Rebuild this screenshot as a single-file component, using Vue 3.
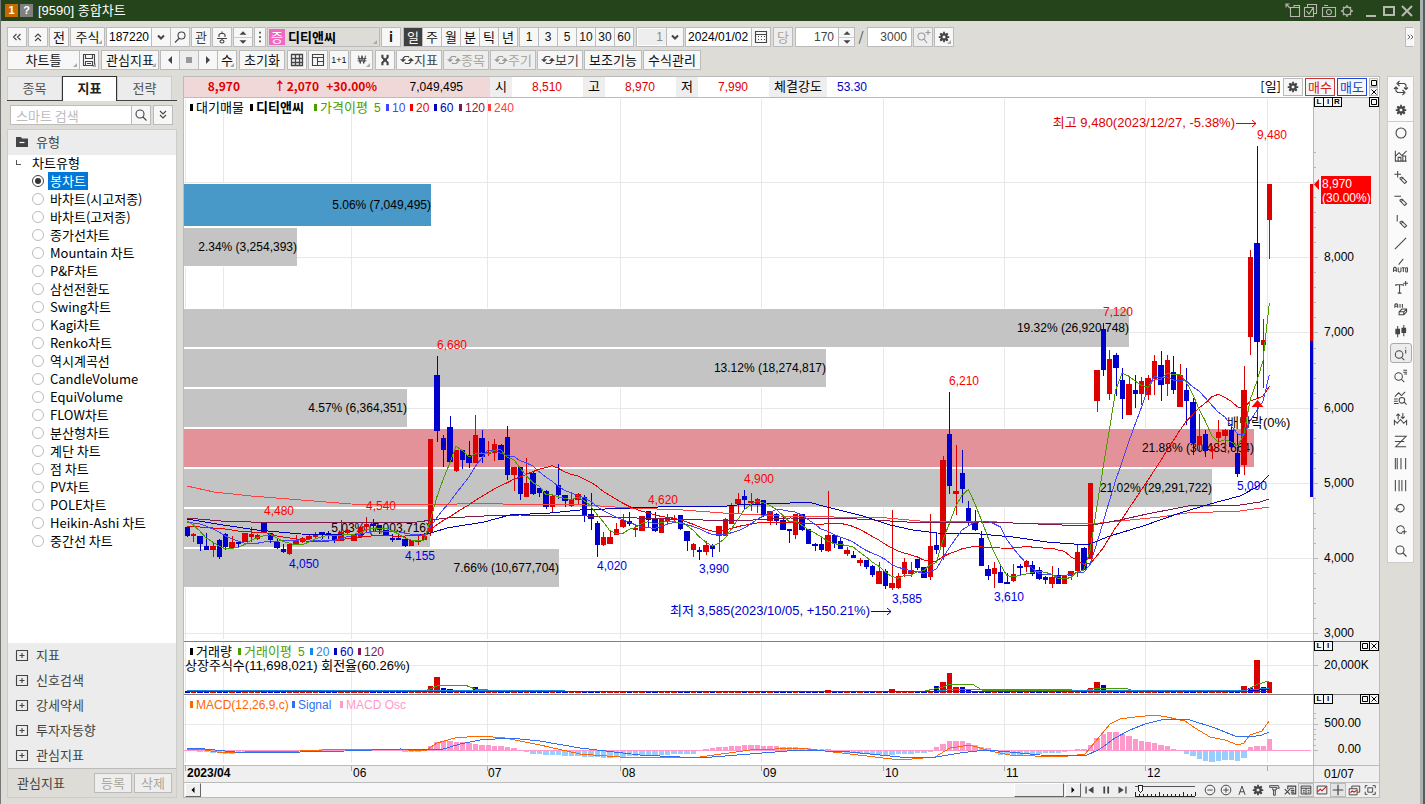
<script setup>
import { ref, computed, h, onMounted, onBeforeUnmount } from 'vue'

/* ---------- icons: s = stroked, f = filled, r = red stroke, x = white stroke, on a 16px grid ---------- */
const gearF = 'M7 2h2v2h1l1.5-1 1.5 1.5-1 1.5v1h2v2h-2v1l1 1.5-1.5 1.5-1.5-1h-1v2h-2v-2h-1l-1.5 1-1.5-1.5 1-1.5v-1h-2v-2h2v-1l-1-1.5 1.5-1.5 1.5 1h1zM6.5 6.5v3h3v-3z'
const icons = {
  left2: { s: 'M7.5 5l-3 3 3 3M11.5 5l-3 3 3 3' },
  up2: { s: 'M5 8l3-3 3 3M5 12l3-3 3 3' },
  down2: { s: 'M5 4l3 3 3-3M5 8l3 3 3-3' },
  right2: { s: 'M5 5l3 3-3 3M9 5l3 3-3 3' },
  chev: { s: 'M5 6.5l3 3 3-3', w: 2 },
  find: { s: 'M9.5 3a3.5 3.5 0 1 1 0 7a3.5 3.5 0 1 1 0-7zM7 9.5L3 13.5' },
  findR: { s: 'M7 3a4 4 0 1 1 0 8a4 4 0 1 1 0-8zM10 10l3.5 3.5' },
  findPlus: { s: 'M6.5 4a3.5 3.5 0 1 1 0 7a3.5 3.5 0 1 1 0-7zM9 10l3 4M13 1v5M10.5 3.5h5' },
  findI: { s: 'M6.5 5a4 4 0 1 1 0 8a4 4 0 1 1 0-8zM9 12l3 3M13.5 4v4M13.5 1.5v1' },
  findList: { s: 'M6 5a4 4 0 1 1 0 8a4 4 0 1 1 0-8zM9 12l3 3M11 2.5h4M11 4.5h4M12 6.5h3' },
  speaker: { s: 'M8 2.5v2M5 8V5.5l1.5-1h3l1.5 1V8M3 9.5h10M8 10v1M6 12.5a2 1.5 0 1 0 4 0a2 1.5 0 1 0-4 0' },
  dots: { f: 'M7 2h2v2H7zM7 7h2v2H7zM7 12h2v2H7z' },
  cal: { s: 'M2.5 2.5h11v11h-11zM2.5 5.5h11', f: 'M5 7h1v1H5zM8 7h1v1H8zM11 7h1v1h-1zM5 10h1v1H5zM8 10h1v1H8zM11 10h1v1h-1z' },
  gear: { f: gearF },
  gearO: { s: 'M8 4a4 4 0 1 1 0 8a4 4 0 1 1 0-8zM8 2v2M8 12v2M2 8h2M12 8h2M4 4l1 1M12 4l-1 1M4 12l1-1M12 12l-1-1', w: 1.4 },
  save: { s: 'M2.5 2.5h11v11h-11zM4.5 2.5v4h7v-4M4.5 13.5v-4h7v4M6 11.5h4' },
  prev: { f: 'M10 4v8L6 8z' },
  next: { f: 'M6 4v8l4-4z' },
  stop: { f: 'M5 5h6v6H5z' },
  table: { s: 'M2.5 2.5h11v11h-11zM2.5 6.5h11M2.5 10.5h11M6.5 2.5v11M10.5 2.5v11', w: 1.3 },
  panes: { s: 'M2.5 2.5h11v11h-11zM2.5 5.5h11M7.5 5.5v8M7.5 9.5h6' },
  won: { s: 'M4 3l2 9 2-9 2 9 2-9M3 6.5h10M3 9h10' },
  tool: { s: 'M5 2v3l2 2v2l-2 2v3M11 2v3l-2 2v2l2 2v3', w: 2.4 },
  swap: { s: 'M3.500 8V6l2-2h4l1 1M12.500 8v2l-2 2h-4l-1-1', f: 'M0 7h7l-3.500 3.500zM9 9h7l-3.500-3.500z', w: 1.4 },
  spinU: { f: 'M8 6l4 4H4z' },
  spinD: { f: 'M8 10l4-4H4z' },
  folder: { f: 'M2 3h5l1 1.5h6V13H2z', x: 'M5.5 8.5h5' },
  plus: { s: 'M2.5 3.5h5M2.5 3.5v10h11v-10h-6M8 6v5M5.5 8.5h5' },
  pop: { s: 'M5.5 4.5v9h9v-9zM9 4.5v-2h5.5v2M1 1l4 4M1 4.5V1h3.5' },
  stack: { s: 'M4.5 4.5v-3h9v9h-3M1.5 4.5h9v9h-9zM3.5 8l2.5 3 4-6' },
  cam: { s: 'M1.5 4.5h13v9h-13zM3 2.5h4M8 6.5a2.5 2.5 0 1 1 0 5a2.5 2.5 0 1 1 0-5z' },
  min: { s: 'M3 13h10', w: 2 },
  max: { s: 'M3 4h10v8H3z', w: 2 },
  close: { s: 'M3 3l10 10M13 3L3 13', w: 2 },
  loop: { s: 'M5 3.5h6.5l1.5 1.5v4M11 12.5H4.5L3 11V7M6.500 1L4 3.5 6.500 6M1 9l2-2 2 2M9.500 10l2.500 2.500-2.500 2.500M11 7.500l2 2 2-2' },
  circle: { s: 'M8 3a5 5 0 1 1 0 10a5 5 0 1 1 0-10z' },
  chartb: { s: 'M2.5 3v11h12M2.5 9l4-4 3 3 5-5M5.5 14v-4h3v4M10.5 14V8.5h3V14' },
  crossPen: { s: 'M5 1v7M1.5 4.5h7M7.5 8.5l2-1 5 5-2 2-5-5zM9 10l2-2' },
  linePen: { s: 'M1.5 4.5h7M7.5 8.5l2-1 5 5-2 2-5-5zM9 10l2-2' },
  vertPen: { s: 'M4.5 1v7M7.5 8.5l2-1 5 5-2 2-5-5zM9 10l2-2' },
  diag: { s: 'M2 14L14 2' },
  auto: { s: 'M6 7l5-6M.5 15v-4l1-1h1l1 1v4M.5 13h3M5.5 10v4l1 1h1l1-1v-4M9.5 10.5h3M11 10.5V15M13.5 11v3l.5 1h1l.5-1v-3l-.5-.5h-1z' },
  text: { s: 'M3 6.5V5h8v1.5M7 5v9M5 14h4M13.5 1v5M11 3.5h5' },
  erase: { s: 'M2 6V3l1-1h1l1 1v3M2 4.5h3M7.5 2v4M10 2v4M6.5 10.5l3-3h5v3l-3 3h-5zM6.5 10.5h5v3M11.5 10.5l3-3' },
  candles: { s: 'M5 2v12M11.5 1v12', f: 'M2.5 5h5v6h-5zM9 4h5v5.5H9z' },
  chartFind: { s: 'M2 7l4-4 3 3 4-4M1 9.5h4M1 12h4M1 14.5h5M9.5 8a3 3 0 1 1 0 6a3 3 0 1 1 0-6zM12 13l2.5 2.5' },
  wave: { s: 'M1.5 14V9l3 3 3.5-4 3.5 4 3-3v5M5.5 8V2M3.5 4l2-2 2 2M10.5 1v6M8.5 5l2 2 2-2' },
  zed: { s: 'M2 2.5h12L3 13.5h11M2 8h10' },
  bars1: { s: 'M2.5 2v12M4.5 2v12M8.5 2v12M13.5 2v12' },
  bars2: { s: 'M2.5 2v12M6.5 2v12M9.5 2v12M13.5 2v12' },
  undo: { s: 'M5 11.5a4 4 0 1 0-1-4M1.5 9.5h5M4 7v5' },
  redo: { s: 'M10 11.5a4 4 0 1 1 2-4M9.5 10.5h5M12 8v5' },
  first: { s: 'M3.5 4v8', f: 'M12 4v8L6 8z', w: 1.5 },
  pause: { s: 'M6 4v8M10.5 4v8', w: 2 },
  last: { s: 'M12.5 4v8', f: 'M4 4v8l6-4z', w: 1.5 },
  zoomOut: { s: 'M8 2.5a5.5 5.5 0 1 1 0 11a5.5 5.5 0 1 1 0-11zM5 8h6' },
  zoomIn: { s: 'M8 2.5a5.5 5.5 0 1 1 0 11a5.5 5.5 0 1 1 0-11zM5 8h6M8 5v6' },
  letterA: { s: 'M4.5 13.5l3.5-10 3.5 10M5.500 10h5' },
  hammer: { s: 'M3 5V3h10l1 3h-3V5H3zM6.5 6v2h4V6M7.5 8v6h2V8' },
  listX: { s: 'M5.5 7V3.5h9v9h-5M7.5 6h5M9 8.5h4M9 10.5h4M2 7l6 6M8 7l-6 6', w: 1.3 },
  grid2: { s: 'M2.5 3.5h11v9h-11zM2.5 6h11M8 6v7M4.5 8.5h2M4.5 10.5h2M10 8.5h2M10 10.5h2' },
  chartR: { s: 'M2.5 3.5h11v9h-11z', r: 'M3 10l3-3 2 2 5-5' },
  cross: { s: 'M8 2v12M2 8h12', w: 1.4 },
  winR: { s: 'M5.5 6V3.5h9v7H12M2.5 6.5h9v7h-9z', r: 'M4 11l2-2 2 1.5 3-2' },
  full: { s: 'M2.5 6V3H5M11 3h3v3M14 10v3h-3M5 13H2.5v-3M5.5 5.5h5.5v5H5.5z' },
  boxT: { s: 'M3 3h10v10H3z', w: 2 },
}
const Ic = (p) => {
  const i = icons[p.n]
  const k = []
  if (i.f) k.push(h('path', { d: i.f, fill: 'currentColor', 'fill-rule': 'evenodd' }))
  if (i.s) k.push(h('path', { d: i.s, fill: 'none', stroke: 'currentColor', 'stroke-width': i.w || 1.1 }))
  if (i.r) k.push(h('path', { d: i.r, fill: 'none', stroke: '#c00000', 'stroke-width': 1.2 }))
  if (i.x) k.push(h('path', { d: i.x, fill: 'none', stroke: '#fff', 'stroke-width': 1.2 }))
  return h('svg', { width: p.z || 16, height: p.z || 16, viewBox: '0 0 16 16', 'aria-hidden': 'true' }, k)
}
Ic.props = ['n', 'z']

/* ---------- static lists ---------- */
const periods = ['일', '주', '월', '분', '틱', '년']
const minutes = [1, 3, 5, 10, 30, 60]
const types = ['봉차트', '바차트(시고저종)', '바차트(고저종)', '종가선차트', 'Mountain 차트', 'P&F차트', '삼선전환도', 'Swing차트', 'Kagi차트', 'Renko차트', '역시계곡선', 'CandleVolume', 'EquiVolume', 'FLOW차트', '분산형차트', '계단 차트', '점 차트', 'PV차트', 'POLE차트', 'Heikin-Ashi 차트', '중간선 차트']
const chartType = ref('봉차트')
const folders = ['지표', '신호검색', '강세약세', '투자자동향', '관심지표']
const tools = ['circle', 'chartb', 'crossPen', 'linePen', 'vertPen', 'diag', 'auto', 'text', 'erase', 'candles', 'findI', 'findList', 'chartFind', 'wave', 'zed', 'bars1', 'bars2', 'undo', 'redo', 'findR']
const foot = ['zoomOut', 'zoomIn', 'letterA', 'gear', 'hammer', 'listX', 'grid2', 'chartR', 'cross', 'winR', 'full']

/* ---------- responsive horizontal scale ---------- */
const plot = ref(null)
const w = ref(1129)
let ro
onMounted(() => {
  const m = () => { w.value = Math.round(plot.value.getBoundingClientRect().width) || 1129 }
  m()
  ro = new ResizeObserver(m)
  ro.observe(plot.value)
})
onBeforeUnmount(() => ro && ro.disconnect())
const X = (v) => 184 + ((v - 184) * w.value) / 1129

/* ---------- candles: [rising, bodyTop, bodyBottom, high, low] ---------- */
const C = [
  [0,527,536,527,537],[1,534,536,533,542],[0,536,544,536,551],[0,546,550,533,550],[1,546,550,543,557],[0,540,557,539,559],[0,534,547,533,550],[1,542,548,536,548],[0,542,544,542,548],[1,533,542,533,542],
  [1,534,537,527,542],[1,535,539,534,540],[0,523,532,523,532],[0,533,540,533,543],[0,542,548,538,549],[0,549,552,544,553],[1,544,554,544,555],[1,541,544,535,544],[1,538,542,537,543],[1,536,539,535,540],
  [1,535,537,532,539],[0,532,534,532,539],[0,533,534,531,539],[0,535,541,535,543],[1,532,541,520,541],[1,530,533,529,535],[1,535,541,535,541],[1,527,537,526,537],[1,524,527,517,533],[0,524,526,519,532],
  [0,525,530,525,534],[0,530,535,530,535],[0,538,539,534,542],[0,538,540,535,540],[0,539,546,537,547],[1,540,546,540,546],[1,540,542,535,545],[1,536,540,536,540],[1,439,532,439,536],[0,375,431,356,442],
  [0,438,450,435,467],[0,427,462,416,463],[1,450,471,450,472],[0,450,460,450,469],[0,455,463,441,468],[1,435,463,415,463],[0,438,457,430,463],[1,452,454,441,456],[1,444,453,439,461],[0,445,460,444,460],
  [0,437,475,426,480],[1,467,475,467,491],[0,467,494,467,500],[1,483,497,458,497],[0,473,494,472,495],[0,488,493,488,497],[0,491,507,490,509],[1,496,507,494,513],[0,485,495,464,499],[0,495,501,495,507],
  [1,499,506,494,507],[1,494,500,493,504],[0,497,515,495,522],[0,514,519,493,530],[0,523,545,521,557],[1,537,545,532,546],[1,537,544,531,544],[1,529,535,523,535],[1,520,527,514,528],[0,521,524,512,526],
  [1,528,529,524,537],[1,516,531,516,531],[0,511,520,511,528],[0,518,531,512,532],[1,519,533,519,533],[1,519,522,514,524],[1,518,519,515,522],[0,515,529,515,530],[0,531,541,531,551],[1,544,550,543,557],
  [0,550,552,547,560],[1,545,552,541,555],[0,545,549,544,557],[1,526,536,526,552],[1,519,536,518,536],[1,505,524,503,524],[1,499,504,493,513],[0,496,500,490,509],[1,501,503,493,511],[1,499,504,498,513],
  [0,500,515,500,517],[1,511,521,511,525],[0,514,521,513,525],[0,520,530,517,530],[0,529,531,529,543],[1,514,535,514,539],[0,514,530,514,531],[0,529,544,529,544],[0,544,546,543,551],[0,544,550,537,552],
  [1,535,551,491,552],[0,535,543,535,548],[0,541,549,538,549],[1,550,554,547,556],[0,555,558,551,558],[1,560,563,558,566],[0,560,567,560,569],[0,566,575,565,577],[1,571,584,562,584],[0,571,586,569,589],
  [1,583,588,510,590],[1,576,588,573,589],[1,562,574,558,577],[1,570,574,562,577],[0,559,568,559,570],[0,567,578,567,578],[1,546,577,514,580],[0,545,550,533,554],[1,460,547,456,560],[0,434,486,392,494],
  [1,491,494,445,515],[0,473,489,450,503],[0,508,521,501,526],[0,523,530,510,531],[0,538,566,531,566],[0,569,576,565,580],[1,568,574,562,588],[0,572,583,564,583],[0,582,584,573,584],[1,574,581,564,582],
  [0,566,568,564,576],[1,561,567,560,572],[0,565,574,561,576],[0,570,579,567,580],[0,577,580,576,584],[1,577,584,566,588],[0,575,584,568,584],[1,575,584,575,584],[1,571,576,571,580],[1,552,571,545,577],
  [0,548,570,547,570],[1,483,559,483,559],[1,370,401,370,412],[0,329,370,323,376],[1,359,394,350,400],[0,355,368,353,396],[0,380,399,368,419],[1,384,415,377,415],[0,390,394,375,408],[1,381,394,377,405],
  [1,378,395,375,400],[1,361,379,355,395],[0,365,385,351,401],[1,360,384,355,396],[0,372,390,356,394],[1,375,407,364,407],[0,390,401,368,425],[0,402,443,398,455],[1,436,445,414,451],[0,434,451,430,457],
  [1,449,450,446,459],[1,432,438,420,447],[1,430,436,429,453],[0,430,447,424,451],[0,453,474,434,477],[1,390,465,366,475],[1,257,337,250,355],[0,243,342,146,398],[1,340,345,319,388],[1,184,220,184,259],
]
const step = 6.405
const slot = (i) => {
  const left = Math.round(X(184.6 + i * step))
  return { x: left, bw: Math.max(2, Math.round(X(184.6 + (i + 1) * step)) - left - 1) }
}
const candles = computed(() => C.map((c, i) => ({
  ...slot(i), wx: Math.round(X(187 + i * step)), col: c[0] ? '#dd0000' : '#0000cc', t: c[1], bh: Math.max(2, c[2] - c[1]), hi: c[3], lo: c[4],
})))
const close = C.map((c) => (c[0] ? c[1] : c[2]))
const poly = (pts) => pts.map((p) => `${X(p[0]).toFixed(1)},${p[1].toFixed(1)}`).join(' ')
const ma = (n, head) => {
  const out = head.map((y, i) => [187 + i * step, y])
  for (let i = head.length; i < close.length; i++) {
    let s = 0
    for (let k = 0; k < n; k++) s += i - k < 0 ? head[0] : close[i - k]
    out.push([187 + i * step, s / n])
  }
  return out
}
const lines = [
  { c: '#ff4040', p: [[187,486],[214,492],[251,496],[301,500],[351,504],[431,505],[484,503],[503,504],[570,504],[630,508],[683,510],[723,513],[780,516],[887,518],[920,521],[980,521],[1013,523],[1090,524],[1120,521],[1160,517],[1187,513],[1240,511],[1269,507]] },
  { c: '#801850', p: [[187,518],[221,521],[251,522],[417,522],[447,518],[484,516],[520,515],[587,516],[637,518],[703,520],[753,520],[790,518],[857,519],[890,521],[923,523],[980,522],[1013,523],[1087,526],[1120,520],[1147,514],[1173,509],[1193,505],[1240,505],[1260,502],[1269,499]] },
  { c: '#0000c0', p: [[187,519],[223,525],[257,530],[301,534],[364,535],[417,535],[431,533],[447,528],[484,522],[510,515],[550,513],[580,510],[630,508],[687,506],[717,507],[737,505],[790,503],[808,502],[827,507],[863,516],[890,525],[913,530],[937,533],[980,534],[1013,537],[1047,542],[1087,545],[1110,536],[1143,526],[1180,513],[1210,504],[1240,496],[1257,487],[1269,475]] },
  { c: '#ee0000', p: ma(20, [526,526,527,527,528,528,529,530,531,531,532,532,532,534,536,537,538,539,540]) },
  { c: '#4444ff', p: ma(10, [522,523,524,526,529,532,536,539,541]) },
  { c: '#4c9c00', p: ma(5, [521,525,531,538]) },
]
const gridX = [185, 223, 351, 487, 620, 761, 883, 1004, 1145, 1267]
const gridY = [182, 257, 332, 408, 483, 558, 633]
const profile = [
  { y: 184, h: 42, x: 431, c: '#4898c8', t: '5.06% (7,049,495)' },
  { y: 228, h: 38, x: 297, c: '#c4c4c4', t: '2.34% (3,254,393)' },
  { y: 309, h: 38, x: 1129, c: '#c4c4c4', t: '19.32% (26,920,748)' },
  { y: 349, h: 38, x: 826, c: '#c4c4c4', t: '13.12% (18,274,817)' },
  { y: 389, h: 38, x: 407, c: '#c4c4c4', t: '4.57% (6,364,351)' },
  { y: 429, h: 38, x: 1254, c: '#e4929a', t: '21.88% (30,483,664)' },
  { y: 469, h: 38, x: 1212, c: '#c4c4c4', t: '21.02% (29,291,722)' },
  { y: 509, h: 38, x: 430, c: '#c4c4c4', t: '5.03% (7,003,716)' },
  { y: 549, h: 38, x: 559, c: '#c4c4c4', t: '7.66% (10,677,704)' },
]
const R = '#ff0000', B = '#0000e6'
const notes = [
  [437,349,'6,680',R],[264,515,'4,480',R],[366,510,'4,540',R],[289,568,'4,050',B],[405,560,'4,155',B],[648,504,'4,620',R],[744,483,'4,900',R],[597,570,'4,020',B],[699,573,'3,990',B],[949,385,'6,210',R],[892,603,'3,585',B],[994,601,'3,610',B],[1103,316,'7,120',R],[1237,490,'5,090',B],[1257,139,'9,480',R],
]
const legend = [
  [190,'대기매물','#000'],[250,'디티앤씨','#000','bold'],[314,'가격이평','#4c9c00'],[386,'10','#4444ff'],[410,'20','#ee0000'],[434,'60','#0000c0'],[459,'120','#801850'],[488,'240','#ff4040'],
]
const volLegend = [[190,'거래량','#000'],[238,'거래이평','#4c9c00'],[310,'20','#1888e0'],[334,'60','#0000c0'],[358,'120','#801850']]
const macdLegend = [[190,'MACD(12,26,9,c)','#ff6600'],[292,'Signal','#3070f0'],[340,'MACD Osc','#ff99cc']]

const tops = { 37:690,38:686,39:677,40:688,41:689,45:687,46:690,100:690,110:689,117:686,118:682,119:673,120:687,121:687,122:690,139:690,141:688,142:682,143:685,144:690,145:690,146:690,147:690,165:686,166:688,167:660,168:687,169:682 }
const flip = { 39: 1, 45: 0, 119: 1, 166: 0, 167: 1, 168: 0 }
const vols = computed(() => C.map((c, i) => {
  const t = tops[i] || 691
  return { ...slot(i), t, hh: 693 - t, col: (i in flip ? flip[i] : c[0]) ? '#dd0000' : '#0000cc' }
}))
const volLines = [
  { c: '#4c9c00', p: [[187,691],[425,691],[437,686],[465,685],[475,689],[500,691],[925,691],[943,687],[951,684],[972,684],[982,690],[1087,690],[1100,688],[1124,688],[1135,691],[1245,691],[1258,684],[1269,681]] },
  { c: '#1888e0', p: [[187,691],[431,690],[550,690],[565,691],[937,691],[955,689],[1068,689],[1075,691],[1250,690],[1269,688]] },
  { c: '#0000c0', p: [[187,692],[800,691],[1250,691],[1269,689]] },
  { c: '#801850', p: [[187,691],[1269,691]] },
]
const hist = [[0,0],[3,-1],[6,-3],[9,-2],[12,0],[20,0],[22,1],[30,1],[33,0],[34,-1],[36,-1],[37,1],[38,4],[39,8],[41,9],[45,6],[50,3],[52,0],[54,-3],[60,-5],[66,-7],[72,-4],[79,-3],[80,0],[82,2],[88,5],[94,3],[99,1],[101,0],[103,-2],[108,-4],[113,-3],[116,-1],[117,3],[119,9],[121,9],[124,3],[126,0],[127,-4],[129,-5],[131,-3],[136,-2],[138,0],[139,1],[140,1],[141,5],[142,12],[143,16],[144,18],[145,18],[146,16],[147,14],[148,11],[149,9],[150,8],[151,7],[152,5],[153,4],[154,1],[155,0],[156,-3],[157,-5],[158,-8],[159,-10],[160,-11],[161,-10],[162,-9],[163,-9],[164,-10],[165,-7],[166,3],[167,4],[168,4],[169,11]]
const osc = computed(() => C.map((c, i) => {
  const k = Math.max(1, hist.findIndex((p) => p[0] >= i))
  const [a, b] = [hist[k - 1], hist[k]]
  const v = Math.round(a[1] + ((b[1] - a[1]) * (i - a[0])) / (b[0] - a[0]))
  return { ...slot(i), t: v > 0 ? 750 - v : 751, hh: Math.abs(v), col: v > 0 ? '#ff99cc' : '#99ccff' }
}))
const macdLines = [
  { c: '#ff6600', p: [[187,749],[205,750],[223,753],[245,752],[300,751],[345,749],[390,749],[425,751],[437,743],[455,738],[480,736],[505,738],[540,745],[580,754],[620,757],[700,757],[750,750],[800,748],[850,754],[900,760],[935,757],[950,748],[970,745],[990,751],[1010,755],[1060,757],[1085,754],[1100,736],[1110,724],[1120,719],[1135,717],[1155,715],[1167,717],[1185,721],[1195,728],[1210,737],[1225,740],[1238,745],[1244,743],[1250,735],[1262,731],[1269,721]] },
  { c: '#3070f0', p: [[187,748],[205,749],[235,752],[300,752],[345,751],[400,749],[440,750],[460,744],[480,740],[510,738],[540,741],[580,748],[640,755],[700,758],[750,754],[800,750],[850,752],[900,757],[930,758],[960,753],[985,750],[1010,752],[1040,755],[1085,756],[1100,749],[1115,738],[1130,730],[1145,724],[1165,719],[1190,720],[1215,728],[1235,736],[1250,737],[1262,735],[1269,732]] },
]
const priceTicks = Array.from({ length: 33 }, (_, i) => Math.round(152 + i * 15.04))
const months = [[353,'06'],[488,'07'],[622,'08'],[763,'09'],[885,'10'],[1006,'11'],[1147,'12']]
</script>

<template>
  <div class="win">
    <header class="title">
      <span class="tag one">1</span><span class="tag q">?</span>
      <h1>[9590] 종합차트</h1>
      <div class="caps">
        <button aria-label="분리"><Ic n="pop" /></button>
        <button aria-label="화면목록"><Ic n="stack" /></button>
        <button aria-label="캡처"><Ic n="cam" /></button>
        <button aria-label="환경설정"><Ic n="gearO" /></button>
        <button aria-label="최소화" class="wide"><Ic n="min" /></button>
        <button aria-label="최대화"><Ic n="max" /></button>
        <button aria-label="닫기"><Ic n="close" /></button>
      </div>
    </header>

    <div class="bars">
      <div class="row">
        <button class="b" aria-label="이전"><Ic n="left2" /></button>
        <button class="b" aria-label="접기"><Ic n="up2" /></button>
        <button class="b">전</button>
        <button class="b w35 fold">주식</button>
        <div class="g">
          <input class="code" aria-label="종목코드" value="187220" />
          <button class="b" aria-label="종목 목록"><Ic n="chev" /></button>
          <button class="b" aria-label="종목 검색"><Ic n="find" /></button>
        </div>
        <button class="b dim">관</button>
        <button class="b dim" aria-label="음성"><Ic n="speaker" /></button>
        <div class="spin w20"><button aria-label="위"><Ic n="spinU" :z="14" /></button><button aria-label="아래"><Ic n="spinD" :z="14" /></button></div>
        <button class="b w12" aria-label="더보기"><Ic n="dots" :z="14" /></button>
        <div class="stock fold"><span class="mk">증</span><b>디티앤씨</b></div>
        <button class="b bold">i</button>
        <div class="g sp">
          <button v-for="(p, i) in periods" :key="p" class="b" :class="{ on: i === 0 }">{{ p }}</button>
        </div>
        <div class="g">
          <button v-for="m in minutes" :key="m" class="b num">{{ m }}</button>
        </div>
        <div class="sel sp">
          <select aria-label="주기" disabled><option>1</option></select>
          <span class="arrow"><Ic n="chev" /></span>
        </div>
        <div class="g">
          <input class="date" aria-label="기준일" value="2024/01/02" />
          <button class="b" aria-label="달력"><Ic n="cal" /></button>
        </div>
        <button class="b off sp">당</button>
        <div class="g sp">
          <input class="cnt" aria-label="봉 개수" value="170" />
          <div class="spin w16"><button aria-label="늘리기"><Ic n="spinU" :z="14" /></button><button aria-label="줄이기"><Ic n="spinD" :z="14" /></button></div>
        </div>
        <span class="slash">/</span>
        <input class="total" aria-label="전체 개수" value="3000" />
        <button class="b off" aria-label="추가 조회"><Ic n="findPlus" /></button>
        <button class="b fold" aria-label="설정"><Ic n="gear" :z="14" /></button>
        <button class="b more" aria-label="펼치기"><Ic n="right2" :z="12" /></button>
      </div>
      <div class="row">
        <div class="g"><button class="b w72 fold">차트틀</button><button class="b fold" aria-label="저장"><Ic n="save" /></button></div>
        <button class="b w58 sp fold">관심지표</button>
        <div class="g">
          <button class="b" aria-label="뒤로"><Ic n="prev" /></button>
          <button class="b off" aria-label="정지"><Ic n="stop" /></button>
          <button class="b" aria-label="앞으로"><Ic n="next" /></button>
          <button class="b fold">수</button>
        </div>
        <button class="b w46 sp">초기화</button>
        <button class="b sp" aria-label="표"><Ic n="table" /></button>
        <button class="b" aria-label="분할"><Ic n="panes" /></button>
        <button class="b tiny">1+1</button>
        <button class="b w22 fold" aria-label="원화"><Ic n="won" :z="14" /></button>
        <button class="b sp" aria-label="도구"><Ic n="tool" :z="14" /></button>
        <button class="b w46 dim"><Ic n="swap" :z="14" />지표</button>
        <button class="b w46 off"><Ic n="swap" :z="14" />종목</button>
        <button class="b w46 off"><Ic n="swap" :z="14" />주기</button>
        <button class="b w46 dim"><Ic n="swap" :z="14" />보기</button>
        <button class="b w58">보조기능</button>
        <button class="b w58">수식관리</button>
      </div>
    </div>

    <div class="work">
      <aside class="side">
        <nav class="tabs"><button>종목</button><button class="act">지표</button><button>전략</button></nav>
        <div class="search">
          <div class="g grow"><input aria-label="스마트 검색" placeholder="스마트 검색" /><button class="b" aria-label="검색"><Ic n="findR" /></button></div>
          <button class="b" aria-label="펼침"><Ic n="down2" /></button>
        </div>
        <section class="tree">
          <h2><Ic n="folder" />유형</h2>
          <div class="list">
            <div class="root"><i></i>차트유형</div>
            <label v-for="t in types" :key="t"><input v-model="chartType" type="radio" name="ctype" :value="t" /><span>{{ t }}</span></label>
          </div>
          <button v-for="f in folders" :key="f" class="fold-row"><Ic n="plus" />{{ f }}</button>
          <div class="fav"><span>관심지표</span><button class="b off w38">등록</button><button class="b off w38">삭제</button></div>
        </section>
      </aside>

      <main class="main">
        <div class="info">
          <div class="hot">
            <b class="c1">8,970</b><b class="c2"><span class="up">↑</span>2,070</b><b class="c3">+30.00%</b><span class="c4">7,049,495</span>
          </div>
          <span class="k">시</span><span class="v">8,510</span>
          <span class="k">고</span><span class="v">8,970</span>
          <span class="k">저</span><span class="v">7,990</span>
          <span class="k wk">체결강도</span><span class="v blue">53.30</span>
          <div class="trade">
            <span>[일]</span>
            <button class="b" aria-label="차트 설정"><Ic n="gear" :z="14" /></button>
            <button class="b buy">매수</button>
            <button class="b sell">매도</button>
            <div class="mini"><button aria-label="최대"><Ic n="boxT" :z="8" /></button><button aria-label="닫기"><Ic n="close" :z="8" /></button></div>
          </div>
        </div>

        <div class="pane">
          <div ref="plot" class="plot">
            <svg width="100%" height="543" :viewBox="`184 98 ${w} 543`" preserveAspectRatio="none">
              <g stroke="#e8e8e8" shape-rendering="crispEdges">
                <line v-for="x in gridX" :key="'x' + x" :x1="X(x) + 0.5" :x2="X(x) + 0.5" y1="99" y2="639" />
                <line v-for="y in gridY" :key="'y' + y" x1="184" :x2="184 + w" :y1="y + 0.5" :y2="y + 0.5" />
              </g>
              <g v-for="p in profile" :key="p.y">
                <rect x="184" :y="p.y - 1" :width="X(p.x) - 184" :height="p.h + 2" fill="#fff" />
                <rect x="184" :y="p.y" :width="X(p.x) - 184" :height="p.h" :fill="p.c" />
              </g>
              <text v-for="p in profile" :key="p.t" :x="X(p.x)" :y="p.y + p.h / 2 + 4" text-anchor="end" class="t12">{{ p.t }}</text>
              <text :x="X(1227)" y="427" class="t13">배당락(0%)</text>
              <g shape-rendering="crispEdges">
                <g v-for="(c, i) in candles" :key="i" :fill="c.col">
                  <rect :x="c.wx" :y="c.hi" width="1" :height="c.lo - c.hi" />
                  <rect :x="c.x" :y="c.t" :width="c.bw" :height="c.bh" />
                </g>
                <polyline v-for="l in lines" :key="l.c" :points="poly(l.p)" fill="none" :stroke="l.c" />
                <rect :x="X(1310)" y="184" width="3" height="157" fill="#dd0000" />
                <rect :x="X(1310)" y="341" width="3" height="156" fill="#0000cc" />
              </g>
              <path :transform="`translate(${X(1257)} 400)`" d="M.5 0l6 7h-12zM0 7h1v12H0z" fill="#ff0000" />
              <text v-for="n in notes" :key="n[2]" :x="X(n[0])" :y="n[1]" :fill="n[3]" class="t12">{{ n[2] }}</text>
              <text :x="X(1235)" y="127" text-anchor="end" class="t13" fill="#dd0000">최고 9,480(2023/12/27, -5.38%)</text>
              <path :transform="`translate(${X(1236)} 123.5)`" d="M0 0h20M16-3.5l4 3.5-4 3.5" fill="none" stroke="#dd0000" />
              <text :x="X(870)" y="615" text-anchor="end" class="t13" fill="#0000cc">최저 3,585(2023/10/05, +150.21%)</text>
              <path :transform="`translate(${X(871)} 611.5)`" d="M0 0h20M16-3.5l4 3.5-4 3.5" fill="none" stroke="#0000cc" />
              <g v-for="l in legend" :key="l[1]" :fill="l[2]">
                <rect :x="l[0]" y="104" width="3" height="7" /><text :x="l[0] + 6" y="112" :font-weight="l[3]" :class="l[1].length > 3 ? 't13' : 't12'">{{ l[1] }}</text>
              </g>
              <text x="374" y="112" class="t12" fill="#4c9c00">5</text>
            </svg>
          </div>
          <div class="axis">
            <svg width="65" height="543" viewBox="1314 98 65 543">
              <g stroke="#b8b8b8" shape-rendering="crispEdges">
                <line v-for="y in priceTicks" :key="y" x1="1314" x2="1316" :y1="y + 0.5" :y2="y + 0.5" />
                <line v-for="y in gridY" :key="'m' + y" x1="1314" x2="1318" :y1="y + 0.5" :y2="y + 0.5" />
              </g>
              <path d="M1314 184.5l5-5.5v11z" fill="#ff0000" />
              <rect x="1321" y="176" width="50" height="28" fill="#ff0000" />
              <text x="1322" y="188" class="t12" fill="#fff">8,970</text>
              <text x="1322" y="202" class="t12" fill="#fff">(30.00%)</text>
              <text v-for="(y, i) in gridY.slice(1)" :key="'p' + y" x="1324" :y="y + 4" class="t12">{{ 8 - i }},000</text>
            </svg>
            <div class="tl"><button>L</button><button>I</button><button>R</button></div>
            <div class="tr"><button aria-label="최대화"><Ic n="boxT" :z="8" /></button></div>
          </div>
        </div>

        <div class="pane">
          <div class="plot">
            <svg width="100%" height="52" :viewBox="`184 642 ${w} 52`" preserveAspectRatio="none">
              <g stroke="#e8e8e8" shape-rendering="crispEdges">
                <line v-for="x in gridX" :key="x" :x1="X(x) + 0.5" :x2="X(x) + 0.5" y1="642" y2="694" />
                <line x1="184" :x2="184 + w" y1="665.5" y2="665.5" />
              </g>
              <g shape-rendering="crispEdges">
                <rect v-for="(v, i) in vols" :key="i" :x="v.x" :y="v.t" :width="v.bw" :height="v.hh" :fill="v.col" />
                <polyline v-for="l in volLines" :key="l.c" :points="poly(l.p)" fill="none" :stroke="l.c" />
              </g>
              <g v-for="l in volLegend" :key="l[1]" :fill="l[2]">
                <rect :x="l[0]" y="648" width="3" height="7" /><text :x="l[0] + 6" y="656" :class="/\d/.test(l[1]) ? 't12' : 't13'">{{ l[1] }}</text>
              </g>
              <text x="298" y="656" class="t12" fill="#4c9c00">5</text>
              <text x="185" y="670" class="t13">상장주식수(11,698,021) 회전율(60.26%)</text>
            </svg>
          </div>
          <div class="axis">
            <svg width="65" height="52" viewBox="1314 642 65 52">
              <path d="M1314 665.5h4" stroke="#b8b8b8" />
              <text x="1324" y="669" class="t12">20,000K</text>
            </svg>
            <div class="tl"><button>L</button><button>I</button></div>
            <div class="tr"><button aria-label="최대화"><Ic n="boxT" :z="8" /></button><button aria-label="닫기"><Ic n="close" :z="8" /></button></div>
          </div>
        </div>

        <div class="pane soft">
          <div class="plot">
            <svg width="100%" height="70" :viewBox="`184 695 ${w} 70`" preserveAspectRatio="none">
              <g stroke="#e8e8e8" shape-rendering="crispEdges">
                <line v-for="x in gridX" :key="x" :x1="X(x) + 0.5" :x2="X(x) + 0.5" y1="696" y2="763" />
                <line x1="184" :x2="184 + w" y1="724.5" y2="724.5" />
              </g>
              <g shape-rendering="crispEdges">
                <rect x="184" y="750" :width="w - 2" height="1" fill="#ff99cc" />
                <rect v-for="(v, i) in osc" :key="i" :x="v.x" :y="v.t" :width="v.bw" :height="v.hh" :fill="v.col" />
                <polyline v-for="l in macdLines" :key="l.c" :points="poly(l.p)" fill="none" :stroke="l.c" />
              </g>
              <g v-for="l in macdLegend" :key="l[1]" :fill="l[2]">
                <rect :x="l[0]" y="701" width="3" height="7" /><text :x="l[0] + 6" y="709" class="t12">{{ l[1] }}</text>
              </g>
            </svg>
          </div>
          <div class="axis">
            <svg width="65" height="70" viewBox="1314 695 65 70">
              <path d="M1314 713.5h2M1314 718.5h2M1314 724.5h4M1314 729.5h2M1314 734.5h2M1314 739.5h2M1314 745.5h2M1314 750.5h4" stroke="#b8b8b8" />
              <text x="1361" y="727" text-anchor="end" class="t12">500.00</text>
              <text x="1361" y="753" text-anchor="end" class="t12">0.00</text>
            </svg>
            <div class="tl"><button>L</button><button>I</button></div>
            <div class="tr"><button aria-label="최대화"><Ic n="boxT" :z="8" /></button><button aria-label="닫기"><Ic n="close" :z="8" /></button></div>
          </div>
        </div>

        <div class="pane soft dates">
          <div class="plot">
            <svg width="100%" height="16" :viewBox="`184 766 ${w} 16`" preserveAspectRatio="none">
              <line v-for="x in gridX" :key="x" :x1="X(x) + 0.5" :x2="X(x) + 0.5" y1="766" y2="771" stroke="#aaa" shape-rendering="crispEdges" />
              <text x="187" y="777" class="t12" font-weight="bold">2023/04</text>
              <text v-for="m in months" :key="m[1]" :x="X(m[0])" y="777" class="t12">{{ m[1] }}</text>
            </svg>
          </div>
          <div class="axis last">01/07</div>
        </div>

        <div class="scroll">
          <button class="knob" aria-label="왼쪽"><Ic n="prev" :z="12" /></button>
          <div class="track"><div class="thumb"></div></div>
          <button class="knob" aria-label="오른쪽"><Ic n="next" :z="12" /></button>
          <div class="play">
            <button aria-label="처음"><Ic n="first" :z="14" /></button>
            <button aria-label="일시정지"><Ic n="pause" :z="14" /></button>
            <button aria-label="끝"><Ic n="last" :z="14" /></button>
          </div>
          <svg class="speed" width="64" height="14" viewBox="0 0 64 14" shape-rendering="crispEdges">
            <path d="M2 3.5h60" stroke="#555" />
            <path d="M2.5 9v4M6.5 11v2M10.5 11v2M14.5 11v2M18.5 11v2M22.5 11v2M26.5 9v4M30.5 11v2M34.5 11v2M38.5 11v2M42.5 11v2M46.5 11v2M50.5 9v4M54.5 11v2M58.5 11v2M62.5 9v4M2 13.5h60" stroke="#222" />
            <path d="M5.5 2.5h4v5l-2 2-2-2z" fill="#fff" stroke="#222" />
          </svg>
          <div class="foot">
            <button v-for="f in foot" :key="f" :class="{ sel2: f === 'grid2' || f === 'cross' }" :aria-label="f"><Ic :n="f" :z="14" /></button>
          </div>
        </div>
      </main>

      <aside class="tools">
        <button aria-label="새로고침"><Ic n="loop" /></button>
        <button aria-label="설정"><Ic n="gear" :z="14" /></button>
        <hr />
        <button v-for="t in tools" :key="t" :class="{ cur: t === 'findI' }" :aria-label="t"><Ic :n="t" :z="t === 'circle' || t === 'findR' ? 16 : 15" /></button>
      </aside>
    </div>
  </div>
</template>

<style>
body { background: #dddcd6; }
</style>
<style scoped>
.win { box-sizing: border-box; min-height: 100vh; display: flex; flex-direction: column; border-left: 1px solid #777; border-right: 5px ridge #aab0b0; background: #dddcd6; font: 13px/18px "Noto Sans CJK KR", sans-serif; color: #000; }
.win *, .win *::before { box-sizing: border-box; }
button, input, select { font: inherit; color: inherit; margin: 0; padding: 0; border-radius: 0; outline: 0; }
button { border: 0; background: none; display: flex; align-items: center; justify-content: center; white-space: nowrap; }
svg { display: block; flex: none; }

.title { height: 21px; background: #25441b; display: flex; align-items: center; gap: 2px; padding-left: 4px; color: #fff; }
.tag { width: 13px; height: 13px; font: bold 11px/13px "Liberation Sans", sans-serif; text-align: center; }
.one { background: #c86800; }
.q { background: #808080; }
.title h1 { margin: 0 0 0 3px; font: 13px/18px "Liberation Sans", "Noto Sans CJK KR", sans-serif; }
.caps { margin-left: auto; display: flex; gap: 2px; padding-right: 5px; color: #b8b8b0; }
.caps .wide { margin-left: 6px; }

.bars { padding: 6px; display: flex; flex-direction: column; gap: 3px; }
.row { display: flex; gap: 1px; height: 20px; }
.b { width: 20px; height: 20px; line-height: 16px; border: 1px solid #bbb; background: #f7f7f7; position: relative; flex: none; color: #111; }
.b svg { color: #444; }
.sp { margin-left: 1px; }
.g { display: flex; flex: none; }
.g > * + * { margin-left: -1px; }
.w12 { width: 12px; } .w16 { width: 17px; } .w20 { width: 20px; } .w22 { width: 23px; } .w35 { width: 35px; } .w38 { width: 38px; } .w46 { width: 46px; } .w58 { width: 58px; } .w72 { width: 73px; }
.dim { color: #444; }
.off { color: #aaa699; background: #eee; }
.off svg { color: #999; }
.on { background: #404040; color: #fff; }
.bold { font-weight: bold; }
.num, .tiny { font: 12px/18px "Liberation Sans", sans-serif; }
.tiny { font-size: 9px; }
.fold::after { content: ""; position: absolute; right: 2px; bottom: 2px; border-left: 4px solid transparent; border-bottom: 4px solid #aaa; }
.row input { height: 20px; border: 1px solid #bbb; background: #fff; font: 12px/18px "Liberation Sans", sans-serif; padding: 0 2px; }
.row .code { width: 46px; }
.row .date { width: 67px; }
.row .cnt { width: 44px; text-align: right; padding-right: 4px; color: #444; }
.row .total { width: 45px; text-align: right; padding-right: 4px; color: #444; }
.slash { width: 10px; text-align: center; color: #444; }
.spin { height: 20px; display: flex; flex-direction: column; border: 1px solid #bbb; background: #f7f7f7; flex: none; color: #444; }
.spin button { height: 9px; overflow: hidden; }
.spin button + button { border-top: 1px solid #ccc; }
.stock { width: 113px; height: 20px; border: 1px solid #bbb; display: flex; align-items: center; gap: 3px; padding-left: 1px; position: relative; line-height: 16px; }
.mk { width: 16px; height: 16px; line-height: 15px; background: #f268c0; color: #fff; text-align: center; }
.sel { width: 48px; height: 20px; position: relative; border: 1px solid #bbb; background: #fff; padding: 1px; }
.sel select { appearance: none; display: block; width: 28px; height: 16px; border: 0; background: #eee; color: #888; font: 12px/16px "Liberation Sans", sans-serif; text-align: right; padding-right: 3px; opacity: 1; }
.arrow { position: absolute; right: 0; top: 0; width: 17px; height: 18px; border-left: 1px solid #bbb; background: #f7f7f7; color: #444; display: grid; place-items: center; }
.more { margin-left: auto; width: 9px; border-right: 1px solid #fff; overflow: hidden; }

.work { flex: 1; display: flex; padding: 0 6px 7px 6px; }
.side { width: 170px; margin-right: 6px; display: flex; flex-direction: column; flex: none; }
.tabs { display: flex; height: 25px; border-bottom: 1px solid #444; }
.tabs button { width: 55px; height: 24px; line-height: 18px; border: 1px solid #ccc; border-bottom: 0; background: #ececec; color: #555; padding-bottom: 2px; }
.tabs .act { height: 25px; background: #fff; border: 1px solid #333; border-bottom: 0; font-weight: bold; color: #222; }
.search { display: flex; gap: 2px; padding: 4px 4px 4px 3px; }
.search .grow { flex: 1; min-width: 0; }
.search input { flex: 1; min-width: 0; height: 20px; border: 1px solid #bbb; background: #fff; padding: 0 5px; font: 13px/18px "Noto Sans CJK KR", sans-serif; }
.search input::placeholder { color: #bbb; opacity: 1; }
.tree { flex: 1; border: 1px solid #ccc; background: #ececec; display: flex; flex-direction: column; }
.tree h2 { margin: 0; height: 25px; display: flex; align-items: center; gap: 6px; padding: 0 0 2px 6px; font-weight: normal; font-size: 13px; color: #444; }
.list { flex: 1; background: #fff; }
.root { height: 17px; line-height: 15px; padding-left: 24px; position: relative; }
.root i { position: absolute; left: 8px; top: 5px; width: 5px; height: 5px; border: solid #555; border-width: 0 0 1px 1px; }
.list label { display: flex; align-items: center; height: 18px; padding-left: 24px; gap: 4px; }
.list label input { appearance: none; width: 12px; height: 12px; border: 1px solid #bbb; border-radius: 50%; background: #fff; display: grid; place-items: center; }
.list label input:checked { border-color: #444; }
.list label input:checked::before { content: ""; width: 6px; height: 6px; border-radius: 50%; background: #333; }
.list label span { padding: 0 2px; height: 18px; line-height: 17px; }
.list input:checked + span { background: #0078d7; color: #fff; }
.fold-row { height: 25px; justify-content: flex-start; gap: 6px; padding: 0 0 2px 6px; color: #444; }
.fav { height: 29px; background: #dddcd6; border-top: 1px solid #bbb; display: flex; align-items: center; gap: 2px; padding: 0 4px 0 9px; color: #444; }
.fav span { margin-right: auto; }

.main { flex: 1; min-width: 0; border: 1px solid #bbb; background: #fff; display: flex; flex-direction: column; }
.info { height: 21px; border-bottom: 1px solid #bbb; display: flex; line-height: 20px; }
.info .v, .hot { font-family: "Liberation Sans", sans-serif; font-size: 12px; }
.hot { width: 306px; background: #f0d8d8; display: flex; color: #d00; text-align: right; }
.hot b { font-family: "Noto Sans CJK KR", sans-serif; font-size: 12px; line-height: 18px; }
.up { margin-right: 1px; }
.c1 { width: 56px; } .c2 { width: 79px; } .c3 { width: 58px; } .c4 { width: 86px; color: #000; }
.k { width: 22px; line-height: 17px; background: #eee; text-align: center; }
.wk { width: 58px; }
.v { width: 71px; padding-right: 21px; text-align: right; color: #d00; }
.v.blue { width: 61px; color: #00c; }
.trade { margin-left: auto; display: flex; align-items: center; gap: 2px; padding-right: 1px; line-height: 16px; }
.trade > span { height: 18px; }
.trade .b { height: 18px; line-height: 14px; }
.trade .buy { width: 30px; border-color: #c33; color: #d02020; }
.trade .sell { width: 30px; border-color: #24d; color: #1840d0; }
.mini { width: 9px; }
.mini button { width: 9px; height: 9px; border: 1px solid #bbb; background: #f7f7f7; }
.pane { display: flex; border-bottom: 1px solid #808080; }
.soft { border-bottom-color: #bbb; }
.plot { flex: 1; min-width: 0; }
.axis { width: 66px; border-left: 1px solid #b8b8b8; background: #efefef; position: relative; flex: none; }
.dates { background: #efefef; }
.last { font: 12px/16px "Liberation Sans", sans-serif; padding-left: 10px; }
.tl, .tr { position: absolute; top: -1px; display: flex; }
.tl { left: 0; } .tr { right: 0; }
.tl button, .tr button { width: 10px; height: 10px; border: 1px solid #000; background: #f7f7f7; font: bold 8px/8px "Liberation Sans", sans-serif; }
.tl button + button, .tr button + button { margin-left: -1px; }
.t12 { font: 12px "Liberation Sans", sans-serif; }
.t13 { font: 13px "Liberation Sans", "Noto Sans CJK KR", sans-serif; }
.t12[font-weight], .t13[font-weight] { font-weight: bold; }

.scroll { height: 14px; display: flex; align-items: stretch; background: #efefef; flex: 1; }
.knob { width: 16px; border: 1px solid #fff; border-right-color: #666; border-bottom-color: #666; background: #efefef; margin-left: 1px; }
.track { flex: 1; background: #f7f7f7; display: flex; justify-content: flex-end; }
.thumb { width: 50px; background: #efefef; border: 1px solid #fff; border-right-color: #666; border-bottom-color: #666; }
.play { display: flex; padding-left: 2px; gap: 2px; color: #444; }
.speed { margin-left: 4px; }
.foot { display: flex; padding-left: 5px; padding-right: 1px; color: #444; }
.foot button { width: 16px; }
.foot .sel2 { background: #e4e4e4; outline: 1px solid #bbb; outline-offset: -1px; }

.tools { width: 27px; margin-left: 7px; align-self: flex-start; border: 1px solid #ccc; background: #fafafa; display: flex; flex-direction: column; align-items: center; color: #444; flex: none; }
.tools button { width: 22px; height: 22px; }
.tools hr { width: 100%; border: 0; border-top: 1px solid #ccc; margin: 0; }
.tools .cur { background: #ececec; border: 1px solid #aaa; border-radius: 3px; height: 20px; margin: 1px 0; }
</style>
